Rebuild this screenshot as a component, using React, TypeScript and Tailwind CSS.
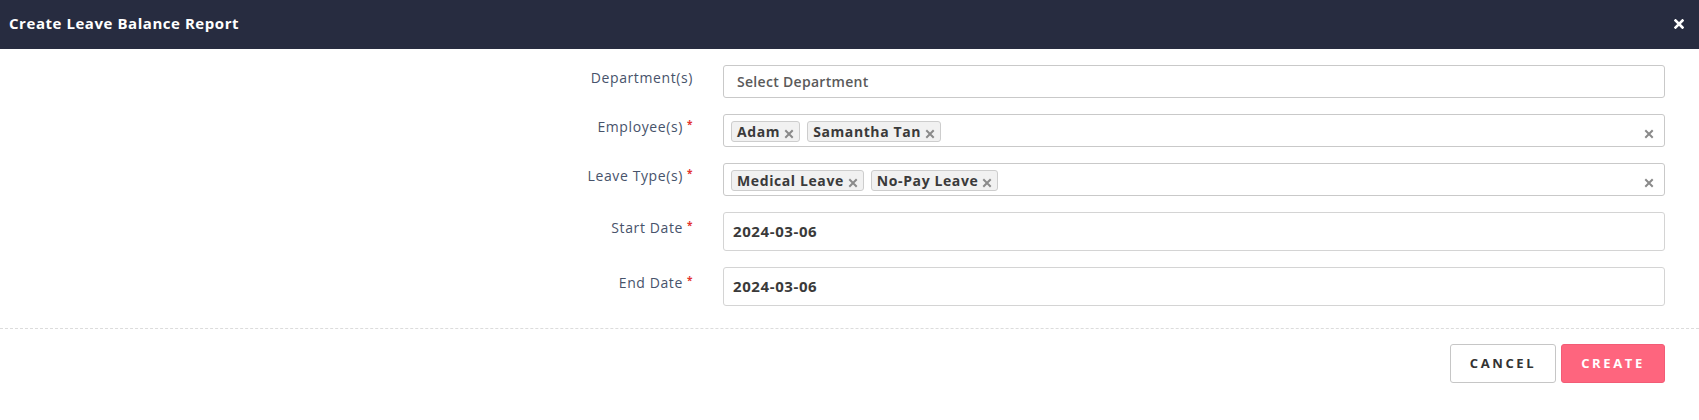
import React from 'react'

const font = { fontFamily: '"Open Sans", "Liberation Sans", sans-serif' }

function Req() {
  return <span className="ml-[4px] text-[10px] font-bold text-[#e3342f] align-top relative top-[-3px]">*</span>
}

function SmallX({ className }: { className?: string }) {
  return (
    <svg viewBox="0 0 10 10" className={className} fill="none" stroke="currentColor" strokeWidth="2" strokeLinecap="square">
      <path d="M2 2L8 8M8 2L2 8" />
    </svg>
  )
}

function Chip({ label }: { label: string }) {
  return (
    <span className="inline-flex items-center h-[21px] pl-[5px] pr-[5px] bg-[#f1f1f1] border border-[#cdcdcd] rounded-[3px] text-[14px] font-bold text-[#3a3a3a] tracking-[0.6px] leading-none">
      {label}
      <SmallX className="w-[10px] h-[10px] ml-[4px] mt-[5px] text-[#8a8a8a]" />
    </span>
  )
}

function Row({ label, required, children, tall }: { label: string; required?: boolean; children: React.ReactNode; tall?: boolean }) {
  return (
    <div className="flex items-start">
      <div className={`w-[693px] text-right text-[14px] text-[#47536b] tracking-[0.6px] leading-[20px] ${tall ? 'pt-[6px]' : 'pt-[3px]'}`}>
        {label}
        {required && <Req />}
      </div>
      <div className="flex-1 ml-[30px]">{children}</div>
    </div>
  )
}

export default function App() {
  return (
    <div className="w-[1699px] h-[420px] bg-white" style={font}>
      <div className="h-[49px] bg-[#272c40] flex items-center justify-between pl-[9px] pr-[15px] pb-[3px]">
        <span className="text-white text-[15px] font-bold tracking-[0.55px]">Create Leave Balance Report</span>
        <svg viewBox="0 0 10 10" className="w-[10px] h-[10px] mt-[2px]" fill="none" stroke="white" strokeWidth="2.6" strokeLinecap="square">
          <path d="M1.5 1.5L8.5 8.5M8.5 1.5L1.5 8.5" />
        </svg>
      </div>

      <div className="pt-[16px] pr-[34px] pb-[22px] flex flex-col gap-[16px]">
        <Row label="Department(s)">
          <div className="h-[33px] border border-[#c9c9c9] rounded-[3px] flex items-center pl-[13px] text-[14px] font-semibold text-[#5a5a5a] tracking-[0.3px]">
            Select Department
          </div>
        </Row>
        <Row label="Employee(s)" required>
          <div className="h-[33px] border border-[#c9c9c9] rounded-[3px] flex items-start pt-[6px] pl-[7px] pr-[10px] gap-[7px]">
            <Chip label="Adam" />
            <Chip label="Samantha Tan" />
            <SmallX className="w-[10px] h-[10px] ml-auto mt-[8px] text-[#8a8a8a]" />
          </div>
        </Row>
        <Row label="Leave Type(s)" required>
          <div className="h-[33px] border border-[#c9c9c9] rounded-[3px] flex items-start pt-[6px] pl-[7px] pr-[10px] gap-[7px]">
            <Chip label="Medical Leave" />
            <Chip label="No-Pay Leave" />
            <SmallX className="w-[10px] h-[10px] ml-auto mt-[8px] text-[#8a8a8a]" />
          </div>
        </Row>
        <Row label="Start Date" required tall>
          <div className="h-[39px] border border-[#d4d4d4] rounded-[3px] flex items-center pl-[9px] text-[15px] font-bold text-[#3a3a3a] tracking-[0.6px]">
            2024-03-06
          </div>
        </Row>
        <Row label="End Date" required tall>
          <div className="h-[39px] border border-[#d4d4d4] rounded-[3px] flex items-center pl-[9px] text-[15px] font-bold text-[#3a3a3a] tracking-[0.6px]">
            2024-03-06
          </div>
        </Row>
      </div>

      <div className="border-t border-dashed border-[#dcdcdc] flex justify-end gap-[5px] pt-[15px] pr-[34px]">
        <button className="w-[106px] h-[39px] border border-[#c6c6c6] rounded-[3px] bg-white text-[13px] font-bold tracking-[2.6px] text-[#333]">
          CANCEL
        </button>
        <button className="w-[104px] h-[39px] border border-[#f25c76] rounded-[3px] bg-[#fe657e] text-[13px] font-bold tracking-[2.6px] text-white">
          CREATE
        </button>
      </div>
    </div>
  )
}
